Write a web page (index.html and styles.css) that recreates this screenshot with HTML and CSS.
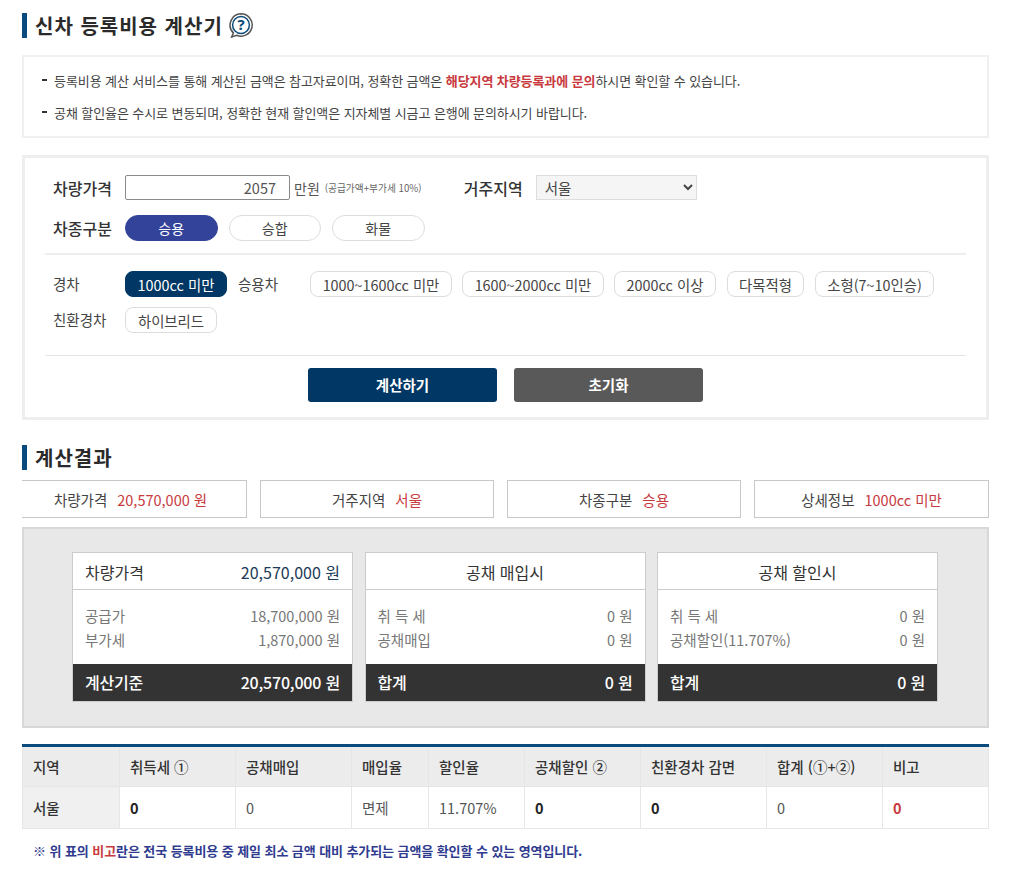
FILE: index.html
```html
<!DOCTYPE html>
<html lang="ko">
<head>
<meta charset="utf-8">
<title>신차 등록비용 계산기</title>
<link rel="stylesheet" href="styles.css">
</head>
<body>
<main class="page">
  <h2 class="heading">신차 등록비용 계산기
    <svg class="help" width="24" height="25" viewBox="0 0 24 25" aria-hidden="true">
      <path d="M12 .8a11.2 11.2 0 1 1-4.4 21.5l-4.9 1.7 1.7-4.1A11.2 11.2 0 0 1 12 .8z" fill="none" stroke="#555" stroke-width="1.5"/>
      <circle cx="12" cy="12" r="8.4" fill="none" stroke="#0c4a78" stroke-width="1.5"/>
      <text x="12" y="17" text-anchor="middle" class="help-q">?</text>
    </svg>
  </h2>
  <section class="notice">
    <p><i class="dash"></i>등록비용 계산 서비스를 통해 계산된 금액은 참고자료이며, 정확한 금액은 <b class="red">해당지역 차량등록과에 문의</b>하시면 확인할 수 있습니다.</p>
    <p><i class="dash"></i>공채 할인율은 수시로 변동되며, 정확한 현재 할인액은 지자체별 시금고 은행에 문의하시기 바랍니다.</p>
  </section>
  <section class="form">
    <div class="row-top">
      <span class="label">차량가격</span>
      <input class="price" type="text" value="2057">
      <span class="unit">만원</span>
      <small class="hint">(공급가액+부가세 10%)</small>
      <span class="label region">거주지역</span>
      <select class="select"><option>서울</option></select>
    </div>
    <div class="row-kind">
      <span class="label">차종구분</span>
      <div class="pills">
        <button class="pill on">승용</button>
        <button class="pill">승합</button>
        <button class="pill">화물</button>
      </div>
    </div>
    <div class="options">
      <div class="opt-row">
        <span class="opt-label">경차</span>
        <button class="opt on w-a">1000cc 미만</button>
        <span class="opt-label mid">승용차</span>
        <button class="opt w-b">1000~1600cc 미만</button>
        <button class="opt w-b">1600~2000cc 미만</button>
        <button class="opt w-c">2000cc 이상</button>
        <button class="opt w-d">다목적형</button>
        <button class="opt w-e">소형(7~10인승)</button>
      </div>
      <div class="opt-row">
        <span class="opt-label">친환경차</span>
        <button class="opt w-f">하이브리드</button>
      </div>
    </div>
    <div class="actions">
      <button class="act navy">계산하기</button>
      <button class="act gray">초기화</button>
    </div>
  </section>
  <h2 class="heading second">계산결과</h2>
  <div class="summary">
    <div class="sum first">차량가격<em>20,570,000 원</em></div>
    <div class="sum">거주지역<em>서울</em></div>
    <div class="sum">차종구분<em>승용</em></div>
    <div class="sum last">상세정보<em>1000cc 미만</em></div>
  </div>
  <section class="panel">
    <article class="card">
      <header class="card-head split"><span>차량가격</span><span class="num">20,570,000 원</span></header>
      <div class="card-body">
        <div class="line"><span>공급가</span><span>18,700,000 원</span></div>
        <div class="line"><span>부가세</span><span>1,870,000 원</span></div>
      </div>
      <footer class="card-foot"><span>계산기준</span><span>20,570,000 원</span></footer>
    </article>
    <article class="card">
      <header class="card-head">공채 매입시</header>
      <div class="card-body">
        <div class="line"><span>취 득 세</span><span>0 원</span></div>
        <div class="line"><span>공채매입</span><span>0 원</span></div>
      </div>
      <footer class="card-foot"><span>합계</span><span>0 원</span></footer>
    </article>
    <article class="card">
      <header class="card-head">공채 할인시</header>
      <div class="card-body">
        <div class="line"><span>취 득 세</span><span>0 원</span></div>
        <div class="line"><span>공채할인(11.707%)</span><span>0 원</span></div>
      </div>
      <footer class="card-foot"><span>합계</span><span>0 원</span></footer>
    </article>
  </section>
  <table class="table">
    <colgroup>
      <col class="c1"><col class="c2"><col class="c3"><col class="c4"><col class="c5"><col class="c6"><col class="c7"><col class="c8"><col class="c9">
    </colgroup>
    <thead>
      <tr><th>지역</th><th>취득세 ①</th><th>공채매입</th><th>매입율</th><th>할인율</th><th>공채할인 ②</th><th>친환경차 감면</th><th>합계 (①+②)</th><th>비고</th></tr>
    </thead>
    <tbody>
      <tr><th>서울</th><td class="strong">0</td><td>0</td><td>면제</td><td>11.707%</td><td class="strong">0</td><td class="strong">0</td><td>0</td><td class="strong red">0</td></tr>
    </tbody>
  </table>
  <p class="foot-note">※ 위 표의 <span class="red">비고</span>란은 전국 등록비용 중 제일 최소 금액 대비 추가되는 금액을 확인할 수 있는 영역입니다.</p>
</main>
</body>
</html>
```
FILE: styles.css
```css
* { box-sizing: border-box; }
html, body { margin: 0; padding: 0; background: #fff; }
body { font-family: "Noto Sans CJK KR", "Noto Sans", sans-serif; color: #333; font-size: 13px; overflow: hidden; }
button, input, select { font-family: inherit; margin: 0; }
.page { width: 967px; margin-left: 22px; padding-top: 13px; }
.heading { margin: 0; height: 25px; padding-left: 8px; border-left: 5px solid #0b4a7d; font-size: 20px; line-height: 25px; font-weight: 700; color: #2a2a2a; display: flex; align-items: center; gap: 6px; letter-spacing: 1px; }
.help { flex: none; }
.help-q { font-size: 15px; font-weight: 700; fill: #0c4a78; font-family: "Noto Sans", sans-serif; letter-spacing: 0; }
.notice { margin-top: 17px; height: 83px; border: 2px solid #f0f0f0; padding: 8px 18px 0; }
.notice p { margin: 0; height: 32px; line-height: 32px; font-size: 13px; letter-spacing: -0.085px; color: #444; display: flex; white-space: pre; align-items: center; }
.dash { width: 5px; height: 2px; background: #333; margin-right: 7px; flex: none; position: relative; top: -1px; }
.red { color: #c83a3e; }
b.red { font-weight: 700; white-space: pre; }
.form { margin-top: 17px; height: 265px; border: 3px solid #eee; padding: 17px 20px 0; }
.row-top, .row-kind { display: flex; align-items: center; padding-left: 8px; }
.row-top { height: 25px; }
.row-kind { height: 26px; margin-top: 15px; }
.label { width: 72px; font-size: 16px; font-weight: 500; color: #333; flex: none; }
.price { width: 165px; height: 25px; border: 1px solid #8a8a8a; border-radius: 2px; text-align: right; padding: 0 13px 0 0; font-size: 14.5px; color: #555; background: #fff; outline: 0; }
.unit { margin-left: 4px; font-size: 14px; color: #555; }
.hint { margin-left: 5px; font-size: 9.7px; color: #666; width: 102px; white-space: nowrap; }
.region { margin-left: 37px; }
.select { width: 161px; height: 25px; border: 1px solid #ddd; background: #f5f5f5; font-size: 14.5px; color: #444; padding-left: 4px; border-radius: 0; }
.pills { display: flex; gap: 11px; }
.pill { width: 92.5px; height: 26px; border-radius: 13px; border: 1px solid #ddd; background: #fff; color: #444; font-size: 14px; padding: 0; }
.pill.on { background: #334399; border-color: #334399; color: #fff; }
.options { margin-top: 12px; height: 103px; border-top: 2px solid #eee; border-bottom: 1px solid #e4e4e4; padding: 16px 0 0 8px; }
.opt-row { display: flex; align-items: center; height: 26px; margin-bottom: 10px; }
.opt-label { width: 72px; font-size: 14.5px; color: #444; flex: none; position: relative; top: -1px; }
.opt-label.mid { margin-left: 11px; }
.opt { height: 26px; border-radius: 8px; border: 1px solid #ddd; background: #fff; color: #444; font-size: 14.4px; padding: 0; margin-right: 10px; white-space: nowrap; }
.opt.on { background: #003764; border-color: #003764; color: #fff; margin-right: 0; }
.w-a { width: 102px; }
.w-b { width: 142px; }
.w-c { width: 102px; margin-right: 11px; }
.w-d { width: 77px; margin-right: 11px; }
.w-e { width: 119px; }
.w-f { width: 92px; }
.actions { display: flex; justify-content: center; gap: 17px; margin-top: 12px; }
.act { width: 189px; height: 34px; border: 0; border-radius: 3px; color: #fff; font-size: 14.5px; font-weight: 700; padding: 0 0 2px; }
.navy { background: #003764; }
.gray { background: #595959; }
.second { margin-top: 25px; }
.summary { display: flex; gap: 13px; margin-top: 10px; }
.sum { width: 234px; height: 38px; border: 1px solid #c8c8c8; display: flex; align-items: center; justify-content: center; font-size: 14.5px; color: #444; white-space: pre; }
.sum.first { width: 225px; border-left: 0; padding-right: 7px; }
.sum.last { flex: 1; }
.sum em { font-style: normal; color: #c83a3e; margin-left: 10px; font-size: 14.5px; }
.panel { margin-top: 9px; height: 201px; background: #e8e8e8; border: 2px solid #d8d8d8; padding: 23px 48px 0; display: flex; gap: 11.5px; }
.card { width: 281px; height: 150px; background: #fff; border: 1px solid #ccc; display: flex; flex-direction: column; }
.card-head { height: 37px; line-height: 38px; text-align: center; border-bottom: 1px solid #ccc; font-size: 16px; color: #333; flex: none; }
.card-head.split { display: flex; justify-content: space-between; padding: 0 12px; }
.num { color: #1c3b58; }
.card-body { flex: 1; padding: 13.5px 12px 0; }
.line { display: flex; justify-content: space-between; height: 24px; line-height: 24px; font-size: 14.5px; color: #777; }
.card-foot { height: 37px; background: #333; color: #fff; display: flex; justify-content: space-between; align-items: center; padding: 0 12px 2px; font-size: 16px; font-weight: 500; letter-spacing: -0.2px; flex: none; }
.table { margin-top: 16px; width: 966px; border-collapse: collapse; table-layout: fixed; border-top: 3px solid #0b4a7d; }
.c1 { width: 97px; } .c2 { width: 116px; } .c3 { width: 116px; } .c4 { width: 77px; } .c5 { width: 96px; } .c6 { width: 116px; } .c7 { width: 126px; } .c8 { width: 116px; } .c9 { width: 106px; }
.table th, .table td { height: 41px; padding: 0 10px; text-align: left; border: 1px solid #e6e6e6; font-size: 14.5px; white-space: nowrap; }
.table th { background: #ececec; font-weight: 500; color: #333; }
.table tbody th { background: #f0f0f0; font-weight: 500; }
.table tbody th, .table tbody td { height: 41.5px; }
.table td { color: #555; }
.table thead th { border-top: 0; }
.table td.strong { font-weight: 700; color: #222; }
.table td.red { color: #c83a3e; }
.foot-note { margin: 12px 0 0 11px; font-size: 13px; letter-spacing: -0.08px; font-weight: 700; color: #2f3b8f; }
```
